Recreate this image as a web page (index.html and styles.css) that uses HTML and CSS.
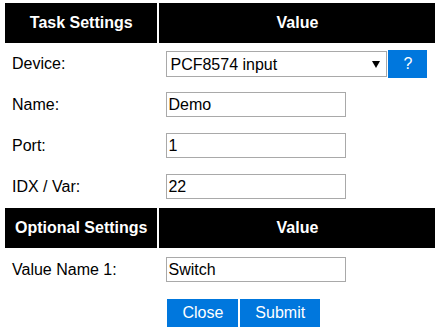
FILE: index.html
```html
<!DOCTYPE html>
<html lang="en">
<head>
    <meta charset="UTF-8">
    <title>Task Settings</title>
    <link rel="stylesheet" href="styles.css">
</head>
<body>

    <table class="settings">
        <tr>
            <th class="col-label">Task Settings</th>
            <th class="col-value">Value</th>
        </tr>
        <tr class="row-device">
            <td>Device:</td>
            <td><span class="select-wrap"><select><option>PCF8574 input</option></select></span><a class="button" href="#">?</a></td>
        </tr>
        <tr>
            <td>Name:</td>
            <td><input type="text" class="field" value="Demo"></td>
        </tr>
        <tr>
            <td>Port:</td>
            <td><input type="text" class="field" value="1"></td>
        </tr>
        <tr>
            <td>IDX / Var:</td>
            <td><input type="text" class="field" value="22"></td>
        </tr>
        <tr>
            <th>Optional Settings</th>
            <th>Value</th>
        </tr>
        <tr>
            <td>Value Name 1:</td>
            <td><input type="text" class="field" value="Switch"></td>
        </tr>
        <tr>
            <td></td>
            <td><a class="button" href="#">Close</a><input type="submit" class="button" value="Submit"></td>
        </tr>
    </table>

</body>
</html>
```

FILE: styles.css
```css
* {
    font-family: "Liberation Sans", Arial, sans-serif;
    font-size: 16px;
}
body {
    margin: 1px 3px;
    background-color: #fff;
    color: #000;
}
.settings {
    border-spacing: 2px;
}
.settings th {
    padding: 10px;
    line-height: 20px;
    background-color: #000;
    color: #fff;
    font-weight: bold;
    white-space: nowrap;
}
.col-label {
    width: 130px;
}
.col-value {
    width: 256px;
}
.settings td {
    padding: 7px;
    line-height: 18px;
    vertical-align: middle;
    white-space: nowrap;
}
.row-device td {
    padding: 4px 7px;
}
.field {
    box-sizing: border-box;
    width: 180px;
    height: 25px;
    margin: 0;
    padding: 1px 1px;
    border: 1px solid #a9a9a9;
    vertical-align: middle;
}
.select-wrap {
    position: relative;
    display: inline-block;
    vertical-align: middle;
}
.select-wrap::after {
    content: "";
    position: absolute;
    right: 7px;
    top: 10px;
    border-left: 4px solid transparent;
    border-right: 4px solid transparent;
    border-top: 7px solid #000;
    pointer-events: none;
}
.select-wrap select {
    -webkit-appearance: none;
    appearance: none;
    box-sizing: border-box;
    width: 221px;
    height: 26px;
    margin: 0;
    padding: 0 3px;
    border: 1px solid #a9a9a9;
    border-radius: 0;
    background-color: #fff;
    color: #000;
}
.button {
    display: inline-block;
    vertical-align: middle;
    margin: 0;
    padding: 5px 15px;
    line-height: 18px;
    background-color: #07d;
    color: #fff;
    border: solid 1px #fff;
    border-radius: 0;
    text-decoration: none;
    -webkit-appearance: none;
    appearance: none;
}
```
